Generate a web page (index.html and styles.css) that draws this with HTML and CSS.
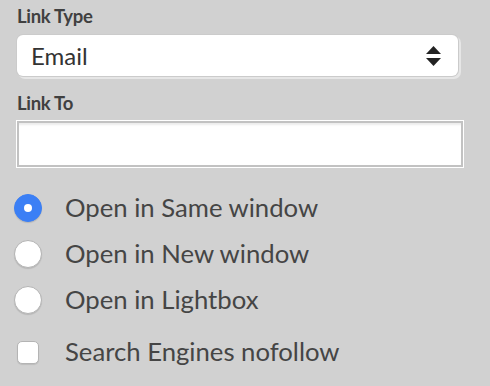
FILE: index.html
```html
<!DOCTYPE html>
<html>
<head>
<meta charset="utf-8">
<link rel="stylesheet" href="styles.css">
</head>
<body>
<form class="panel">
  <label class="field-label">Link Type</label>
  <div class="select">
    <span class="select-value">Email</span>
    <svg class="select-arrows" width="15" height="22" viewBox="0 0 15 22">
      <path d="M7.5 0 L15 8 L0 8 Z" fill="#222"/>
      <path d="M0 12 L15 12 L7.5 20 Z" fill="#222"/>
    </svg>
  </div>
  <label class="field-label field-label--second">Link To</label>
  <div class="text-input"></div>
  <div class="options">
    <div class="option">
      <span class="control"><span class="radio radio--on"></span></span>
      <span class="option-text">Open in Same window</span>
    </div>
    <div class="option">
      <span class="control"><span class="radio"></span></span>
      <span class="option-text">Open in New window</span>
    </div>
    <div class="option">
      <span class="control"><span class="radio"></span></span>
      <span class="option-text">Open in Lightbox</span>
    </div>
    <div class="option option--check">
      <span class="control"><span class="checkbox"></span></span>
      <span class="option-text">Search Engines nofollow</span>
    </div>
  </div>
</form>
</body>
</html>
```
FILE: styles.css
```css
html, body {
  margin: 0;
  padding: 0;
  background: #d1d1d1;
}
body {
  font-family: Lato, "Open Sans", sans-serif;
  color: #454545;
  width: 490px;
  height: 386px;
  overflow: hidden;
}
.panel {
  display: flex;
  flex-direction: column;
  padding: 5px 0 0 16px;
  width: 448px;
}
.field-label {
  display: block;
  font-weight: 700;
  font-size: 18.5px;
  line-height: 22px;
  letter-spacing: -0.3px;
  color: #404040;
  margin-left: 1px;
}
.field-label--second {
  margin-top: 16px;
}
.select {
  margin-top: 8px;
  margin-left: 1px;
  width: 441px;
  height: 41px;
  box-sizing: border-box;
  background: #fff;
  border-radius: 6px;
  box-shadow: 0 0 0 1px #cbcbcb, 2px 2px 0 1px #e6e6e6;
  display: flex;
  align-items: center;
  justify-content: space-between;
  padding: 1px 17px 0 14px;
}
.select-value {
  font-size: 24px;
  line-height: 28px;
  color: #333;
}
.select-arrows {
  display: block;
  margin-top: 1px;
}
.text-input {
  margin-top: 6px;
  width: 448px;
  height: 48px;
  box-sizing: border-box;
  background: #fff;
  border: 1px solid #fff;
  box-shadow: inset 0 0 0 2px #c2c2c2, inset 0 3px 2px 1px #ececec;
}
.options {
  display: flex;
  flex-direction: column;
  gap: 18px;
  margin-top: 26px;
  margin-left: -2px;
}
.option {
  display: flex;
  align-items: center;
  height: 28px;
  gap: 23px;
}
.option--check {
  margin-top: 6px;
}
.control {
  width: 28px;
  height: 28px;
  display: flex;
  align-items: center;
  justify-content: center;
  flex: none;
}
.radio {
  width: 28px;
  height: 28px;
  box-sizing: border-box;
  border-radius: 50%;
  background: #fff;
  border: 1px solid #b4b4b4;
  box-shadow: 0 1px 1px rgba(0,0,0,0.12);
  position: relative;
}
.radio--on {
  background: #3b7ff5;
  border-color: #3b7ff5;
}
.radio--on::after {
  content: "";
  position: absolute;
  width: 8px;
  height: 8px;
  border-radius: 50%;
  background: #fff;
  left: 9px;
  top: 9px;
}
.checkbox {
  width: 22px;
  height: 23px;
  box-sizing: border-box;
  border-radius: 5px;
  background: #fff;
  border: 1px solid #b4b4b4;
  box-shadow: 0 1px 1px rgba(0,0,0,0.1);
}
.option-text {
  font-size: 25.7px;
  line-height: 28px;
  padding-bottom: 2px;
  color: #454545;
}
```
